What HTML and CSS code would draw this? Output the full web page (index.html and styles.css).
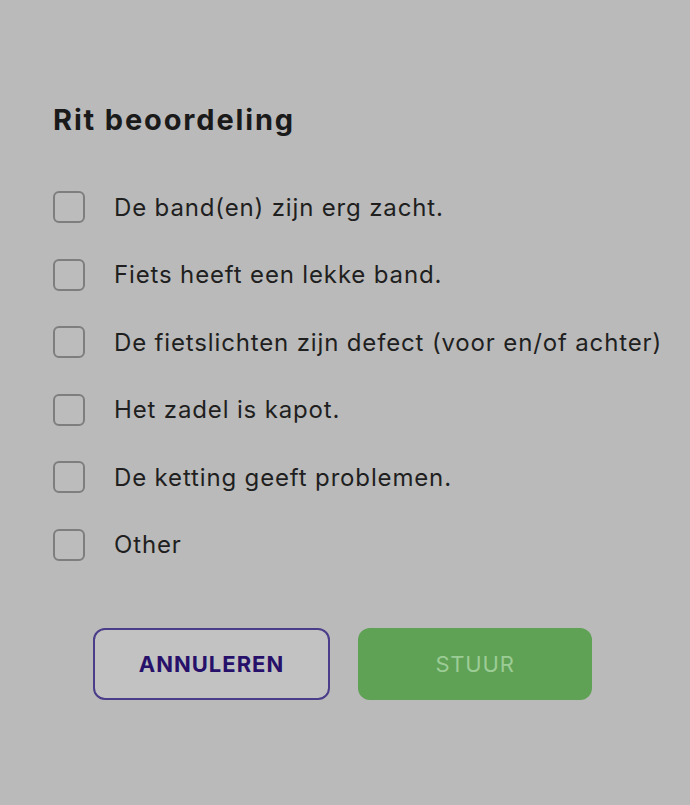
FILE: index.html
```html
<!DOCTYPE html>
<html lang="nl">
<head>
<meta charset="utf-8">
<link rel="stylesheet" href="styles.css">
</head>
<body>
<div class="dialog">
  <h1 class="title">Rit beoordeling</h1>
  <ul class="options">
    <li class="option"><span class="box"></span><span class="label">De band(en) zijn erg zacht.</span></li>
    <li class="option"><span class="box"></span><span class="label">Fiets heeft een lekke band.</span></li>
    <li class="option"><span class="box"></span><span class="label">De fietslichten zijn defect (voor en/of achter)</span></li>
    <li class="option"><span class="box"></span><span class="label">Het zadel is kapot.</span></li>
    <li class="option"><span class="box"></span><span class="label">De ketting geeft problemen.</span></li>
    <li class="option"><span class="box"></span><span class="label">Other</span></li>
  </ul>
  <div class="actions">
    <button class="btn btn-cancel">ANNULEREN</button>
    <button class="btn btn-send">STUUR</button>
  </div>
</div>
</body>
</html>
```

FILE: styles.css
```css
html, body {
  margin: 0;
  padding: 0;
  background: #bababa;
  width: 690px;
  height: 805px;
  overflow: hidden;
  font-family: Inter, "Liberation Sans", Arial, sans-serif;
  color: #1c1c1c;
}

.dialog {
  padding: 100px 0 0 53px;
}

.title {
  margin: 0;
  font-size: 29px;
  font-weight: bold;
  line-height: 40px;
  letter-spacing: 1.85px;
  color: #1a1a1a;
}

.options {
  list-style: none;
  margin: 0;
  padding: 0;
  margin-top: 51px;
}

.option {
  display: flex;
  align-items: center;
  height: 32px;
  margin-bottom: 35.6px;
}

.box {
  box-sizing: border-box;
  width: 32px;
  height: 32px;
  border: 2.5px solid #7e7e7e;
  border-radius: 6px;
  background: #bcbcbc;
  flex: none;
}

.label {
  margin-left: 29px;
  font-size: 24px;
  letter-spacing: 0.85px;
  color: #1f1f1f;
  white-space: nowrap;
}

.actions {
  display: flex;
  gap: 28px;
  margin-top: 67px;
  margin-left: 40px;
}

.btn {
  box-sizing: border-box;
  height: 72px;
  border-radius: 12px;
  font-family: Inter, "Liberation Sans", Arial, sans-serif;
  font-size: 22px;
  font-weight: bold;
  letter-spacing: 1px;
}

.btn-cancel {
  width: 237px;
  background: #c2c2c2;
  border: 2px solid #4b3d8a;
  color: #26106a;
}

.btn-send {
  width: 234px;
  background: #5fa155;
  border: none;
  color: #9ccc95;
  font-weight: normal;
  letter-spacing: 0.8px;
}
```
